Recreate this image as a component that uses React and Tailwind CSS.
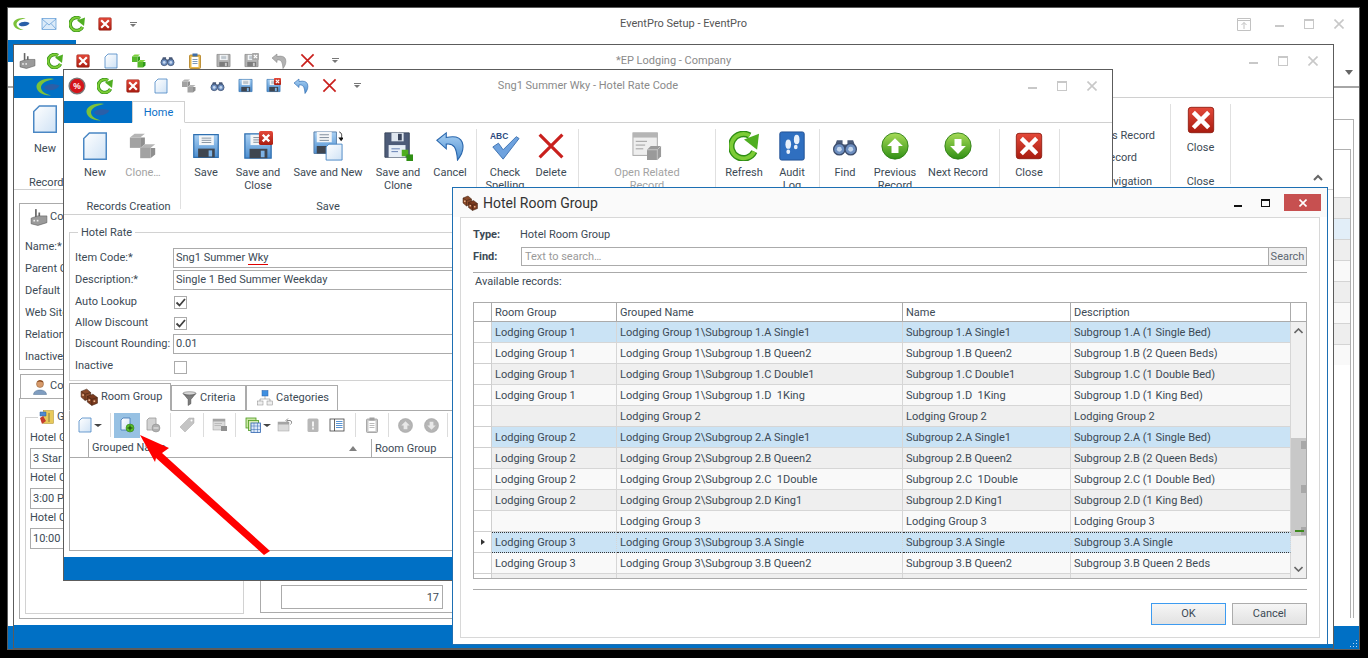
import React from "react";

const S = ({ s = 16, v = 32, children, className = "" }) => (
  <svg width={s} height={s} viewBox={`0 0 ${v} ${v}`} className={`shrink-0 ${className}`}>{children}</svg>
);

const Defs = () => (
  <svg width="0" height="0" className="absolute">
    <defs>
      <linearGradient id="gDoc" x1="0" y1="0" x2="1" y2="1"><stop offset="0" stopColor="#ffffff" /><stop offset="1" stopColor="#cfe2f5" /></linearGradient>
      <linearGradient id="gRed" x1="0" y1="0" x2="0" y2="1"><stop offset="0" stopColor="#e4493a" /><stop offset="1" stopColor="#a81c10" /></linearGradient>
      <linearGradient id="gGreen" x1="0" y1="0" x2="0" y2="1"><stop offset="0" stopColor="#a8dc58" /><stop offset="1" stopColor="#2f8f14" /></linearGradient>
      <linearGradient id="gBlue" x1="0" y1="0" x2="0" y2="1"><stop offset="0" stopColor="#a9d0f3" /><stop offset="1" stopColor="#4c8ed0" /></linearGradient>
    </defs>
  </svg>
);

const Doc = ({ s }) => (
  <S s={s}><path d="M10 2H28V30H4V8Z" fill="url(#gDoc)" stroke="#4a87c4" strokeWidth="1.6" /></S>
);
const Cubes = ({ s, c = "gray" }) => {
  const a = c === "gray" ? ["#b5b5b5", "#8f8f8f", "#a2a2a2"] : ["#7ed23c", "#2f9a1a", "#56b82a"];
  const cube = (x, y) => (
    <g transform={`translate(${x} ${y})`}>
      <path d="M0 4L5 0H16L11 4Z" fill={a[0]} />
      <path d="M11 4H16V0L16 11L11 15Z" fill={a[1]} />
      <rect y="4" width="11" height="11" fill={a[2]} />
    </g>
  );
  return <S s={s}>{cube(2, 3)}{cube(13, 14)}</S>;
};
const Floppy = ({ s, gray, x }) => {
  const body = gray ? "#b4b4b4" : "url(#gBlue)";
  const edge = gray ? "#808080" : "#2f6fb0";
  return (
    <S s={s}>
      <path d="M2 3H30V29H2Z" fill={body} stroke={edge} strokeWidth="1.4" />
      <rect x="8" y="4" width="17" height="11" fill="#f4f6f8" />
      <path d="M11 7H22M11 9.500H22M11 12H22" stroke="#7b8a99" strokeWidth="1" />
      <rect x="7" y="19" width="19" height="10" fill={gray ? "#7c7c7c" : "#3f4650"} />
      <rect x="19" y="21" width="4" height="7" fill={gray ? "#ccc" : "#7db3e6"} />
      {x && <g><rect x="17" y="0" width="15" height="15" rx="2" fill={gray ? "#a8a8a8" : "url(#gRed)"} /><path d="M21 4L28 11M28 4L21 11" stroke="#fff" strokeWidth="2.6" /></g>}
    </S>
  );
};
const DarkFloppy = ({ s }) => (
  <S s={s}>
    <path d="M2 2H28V28H2Z" fill="#4d5b78" stroke="#39445c" />
    <rect x="9" y="2" width="13" height="9" fill="#dfe6ef" />
    <rect x="16" y="3" width="4" height="7" fill="#39445c" />
    <rect x="6" y="15" width="18" height="13" fill="#e7eef7" />
    <path d="M9 19H18M9 22H16" stroke="#5f7bb0" />
    <rect x="20" y="20" width="7" height="7" fill="#4fae21" />
    <rect x="25" y="25" width="7" height="7" fill="#2f8f14" />
  </S>
);
const SaveNew = ({ s }) => (
  <S s={s}>
    <path d="M1 1H25V24H1Z" fill="url(#gBlue)" stroke="#5a7fa8" />
    <rect x="4" y="1" width="16" height="11" fill="#f4f6f8" />
    <path d="M7 4H17M7 7H17M7 10H17" stroke="#7b8a99" />
    <rect x="4" y="16" width="16" height="8" fill="#3f4650" />
    <path d="M17 14H31V31H14V17Z" fill="url(#gDoc)" stroke="#4a87c4" />
    <path d="M28 1C31 2 31 5 30 8" fill="none" stroke="#222" />
    <path d="M27 7H33L30 11Z" fill="#111" />
  </S>
);
const RedBox = ({ s }) => (
  <S s={s}>
    <rect x="1.500" y="1.500" width="29" height="29" rx="3" fill="url(#gRed)" stroke="#8e1c10" />
    <path d="M9 9L23 23M23 9L9 23" stroke="#fff" strokeWidth="5" strokeLinecap="square" />
  </S>
);
const BigX = ({ s }) => (
  <S s={s}><path d="M3 3L29 29M29 3L3 29" stroke="#c9201d" strokeWidth="3.6" /></S>
);
const Refresh = ({ s }) => (
  <S s={s}>
    <path d="M27 22A13 13 0 1 1 22 5" fill="none" stroke="#2f8f14" strokeWidth="7" />
    <path d="M27 22A13 13 0 1 1 22 5" fill="none" stroke="#7dcc36" strokeWidth="4" />
    <path d="M16 9L32 3L30 20Z" fill="#4fae21" />
  </S>
);
const Binoc = ({ s }) => (
  <S s={s}>
    <path d="M6 9H13V14H19V9H26L30 20H2Z" fill="#4a5a78" />
    <circle cx="9" cy="20" r="7" fill="#6e8fc0" stroke="#3c4d6c" strokeWidth="1.6" />
    <circle cx="23" cy="20" r="7" fill="#6e8fc0" stroke="#3c4d6c" strokeWidth="1.6" />
    <circle cx="9" cy="20" r="3" fill="#c6d8ee" />
    <circle cx="23" cy="20" r="3" fill="#c6d8ee" />
  </S>
);
const Undo = ({ s, gray }) => (
  <S s={s}>
    <path
      d="M12 2L2 10L12 19V14C20 13 23 17 24 31C29 25 31 18 29 12C27 7 21 5 12 7Z"
      fill={gray ? "#b2b2b2" : "url(#gBlue)"}
      stroke={gray ? "#8c8c8c" : "#2a67ad"}
      strokeWidth="1.2"
    />
  </S>
);
const Clip = ({ s, gray }) => (
  <S s={s}>
    <rect x="5" y="4" width="22" height="27" rx="2" fill={gray ? "#c9c9c9" : "#e8b84a"} stroke={gray ? "#999" : "#b07d1e"} strokeWidth="1.6" />
    <rect x="9" y="8" width="14" height="20" fill="#fff" />
    <rect x="11" y="1" width="10" height="6" fill={gray ? "#a0a0a0" : "#3f6fa8"} />
    <path d="M11 13H21M11 17H21M11 21H21" stroke={gray ? "#aaa" : "#5a7fa8"} strokeWidth="1.6" />
  </S>
);
const Round = ({ s, dir, gray }) => (
  <S s={s}>
    <circle cx="16" cy="16" r="15" fill={gray ? "#b5b5b5" : "url(#gGreen)"} stroke={gray ? "#999" : "#2b7d12"} />
    <path d={dir === "up" ? "M16 7L25 16H20V24H12V16H7Z" : "M16 25L25 16H20V8H12V16H7Z"} fill={gray ? "#e8e8e8" : "#fff"} />
  </S>
);
const Check = ({ s }) => (
  <S s={s}>
    <text x="0" y="8" fontFamily="'Liberation Sans',sans-serif" fontWeight="700" fontSize="9" fill="#2c4a80">ABC</text>
    <path d="M3 17L9 13L14 20L28 6L31 8L14 30Z" fill="#6ea2de" stroke="#3f72b0" />
  </S>
);
const Audit = ({ s }) => (
  <S s={s}>
    <rect x="3" y="1" width="26" height="30" rx="2" fill="#2f6fc0" stroke="#1f4f92" />
    <ellipse cx="12" cy="14" rx="3" ry="5" fill="#e8f0fa" />
    <ellipse cx="12" cy="22" rx="2" ry="2.400" fill="#e8f0fa" />
    <ellipse cx="21" cy="9" rx="3" ry="5" fill="#e8f0fa" />
    <ellipse cx="20" cy="17" rx="2" ry="2.400" fill="#e8f0fa" />
  </S>
);
const Related = ({ s }) => (
  <S s={s}>
    <rect x="1" y="2" width="26" height="24" fill="#eee" stroke="#a5a5a5" />
    <rect x="1" y="2" width="26" height="5" fill="#b5b5b5" />
    <path d="M4 11H16M4 15H14M4 19H12" stroke="#9a9a9a" />
    <path d="M16 20L20 16H31V27L27 31H16Z" fill="#9a9a9a" />
    <path d="M16 20H27V31M27 20L31 16" stroke="#c7c7c7" fill="none" />
  </S>
);
const Dice = ({ s }) => (
  <S s={s}>
    <path d="M2 6L12 2L19 8V18L9 22L2 16Z" fill="#8a4a2a" stroke="#3e2010" />
    <path d="M13 15L23 11L31 17V27L21 31L13 25Z" fill="#7a3a1e" stroke="#3e2010" />
    <path d="M2 6L9 11L19 8M9 11V22M13 15L21 20L31 17M21 20V31" fill="none" stroke="#3e2010" />
    <rect x="4" y="11" width="3" height="3" fill="#e9b48d" />
    <rect x="15" y="20" width="3" height="3" fill="#e9b48d" />
    <rect x="24" y="22" width="3" height="3" fill="#e9b48d" />
  </S>
);
const Funnel = ({ s }) => (
  <S s={s}>
    <ellipse cx="16" cy="5" rx="14" ry="3.500" fill="#d8d8d8" stroke="#555" />
    <path d="M3 6L13 18V31L19 27V18L29 6C24 10 8 10 3 6Z" fill="#7c7c7c" stroke="#444" />
  </S>
);
const Org = ({ s }) => (
  <S s={s}>
    <rect x="10" y="1" width="12" height="11" fill="#3f8fe0" stroke="#2a5fa8" />
    <path d="M16 12V18M6 22V18H26V22" fill="none" stroke="#777" />
    <rect x="1" y="22" width="11" height="8" fill="#eee" stroke="#888" />
    <rect x="20" y="22" width="11" height="8" fill="#eee" stroke="#888" />
  </S>
);
const Person = ({ s }) => (
  <S s={s}>
    <circle cx="16" cy="10" r="7" fill="#d79a6a" stroke="#8a5a30" />
    <path d="M10 6C12 1 22 1 23 7L16 5Z" fill="#8a4a20" />
    <path d="M3 31C3 19 29 19 29 31Z" fill="#7f9dc0" stroke="#52708f" />
  </S>
);
const Factory = ({ s }) => (
  <S s={s}>
    <rect x="9" y="2" width="3" height="14" fill="#666" />
    <rect x="15" y="8" width="3" height="8" fill="#666" />
    <path d="M2 18L14 14H30V26L14 31L2 28Z" fill="#9a9a9a" stroke="#555" />
    <rect x="6" y="21" width="3" height="3" fill="#eee" />
    <rect x="12" y="21" width="3" height="3" fill="#eee" />
  </S>
);
const GroupIcon = ({ s }) => (
  <S s={s}>
    <rect x="9" y="3" width="20" height="26" fill="#e8c95a" stroke="#a98a2a" />
    <path d="M2 6H14V14H2Z" fill="#4f8ad0" stroke="#2f5f9a" />
    <path d="M2 18L8 14L14 24L6 30Z" fill="#c43c2c" />
    <path d="M20 8V26" stroke="#8a7a3a" strokeWidth="2" />
  </S>
);
const Mail = ({ s }) => (
  <S s={s}>
    <rect x="2" y="5" width="28" height="22" fill="#dcebf9" stroke="#5a97d4" strokeWidth="1.4" />
    <path d="M2 6L16 18L30 6M2 26L12 15M30 26L20 15" fill="none" stroke="#5a97d4" strokeWidth="1.4" />
  </S>
);
const Logo = ({ w = 24, h = 18 }) => (
  <svg width={w} height={h} viewBox="0 0 24 18" className="shrink-0">
    <path d="M18 1C8-1 0 4 .5 9C1 14 7 18 15 17.500C9 16 5 13 5 9.500C5 5.500 10 2.500 18 1Z" fill="#7cc23a" />
    <path d="M8 9C12 5.500 18 5 23.500 7.500C21 12 14 13.500 9 11Z" fill="#2a5fa8" />
  </svg>
);
const Pct = ({ s }) => (
  <S s={s}>
    <circle cx="16" cy="16" r="14" fill="#d4141a" stroke="#777" strokeWidth="2.4" />
    <text x="16" y="21" textAnchor="middle" fontFamily="'Liberation Sans',sans-serif" fontWeight="700" fontSize="15" fill="#fff">%</text>
  </S>
);
const AddDoc = ({ s, gray, minus }) => (
  <S s={s}>
    <path d="M8 2H22V26H4V6Z" fill={gray ? "#d2d2d2" : "url(#gDoc)"} stroke={gray ? "#999" : "#3e74b4"} strokeWidth="1.6" />
    <circle cx="22" cy="22" r="8" fill={gray ? "#b0b0b0" : "#5cc02a"} stroke={gray ? "#888" : "#226f10"} />
    <path d={minus ? "M17 22H27" : "M17 22H27M22 17V27"} stroke={gray ? "#eee" : "#123c08"} strokeWidth="2" />
  </S>
);
const Tag = ({ s }) => (
  <S s={s}><path d="M2 20L20 2H30V12L12 30Z" fill="#c4c4c4" stroke="#a8a8a8" /><circle cx="25" cy="7" r="2" fill="#fff" /></S>
);
const FormGray = ({ s }) => (
  <S s={s}>
    <rect x="2" y="4" width="24" height="22" fill="#dcdcdc" stroke="#9a9a9a" />
    <rect x="2" y="4" width="24" height="5" fill="#a5a5a5" />
    <path d="M5 13H20M5 17H18" stroke="#9a9a9a" />
    <rect x="18" y="18" width="12" height="10" fill="#909090" />
  </S>
);
const Colored = ({ s }) => (
  <S s={s}>
    <rect x="2" y="2" width="20" height="20" fill="#cbe8a5" stroke="#4c9a1e" strokeWidth="1.6" />
    <rect x="7" y="7" width="20" height="20" fill="#d8ecb8" stroke="#4c9a1e" strokeWidth="1.6" />
    <rect x="12" y="12" width="19" height="19" fill="#dbe8f8" stroke="#2f64b0" strokeWidth="1.6" />
    <path d="M12 18H31M12 25H31M18 12V31M25 12V31" stroke="#2f64b0" />
  </S>
);
const Restore = ({ s }) => (
  <S s={s}>
    <rect x="2" y="10" width="22" height="18" fill="#dadada" stroke="#a0a0a0" />
    <rect x="2" y="10" width="22" height="5" fill="#a5a5a5" />
    <path d="M20 7H26C30 7 30 13 27 15M22 3L18 7L22 11" fill="none" stroke="#8a8a8a" strokeWidth="2" />
  </S>
);
const Excl = ({ s }) => (
  <S s={s}>
    <rect x="5" y="3" width="22" height="27" rx="3" fill="#b8b8b8" />
    <rect x="14" y="9" width="4" height="10" fill="#f2f2f2" />
    <rect x="14" y="21" width="4" height="4" fill="#f2f2f2" />
  </S>
);
const Listing = ({ s }) => (
  <S s={s}>
    <rect x="2" y="4" width="28" height="24" fill="#fff" stroke="#404040" strokeWidth="1.6" />
    <path d="M11 4V28" stroke="#404040" strokeWidth="1.6" />
    <path d="M14 9H27M14 13H27M14 17H27M14 21H27" stroke="#2f78c8" strokeWidth="1.6" />
  </S>
);
const Grip = () => (
  <svg width="9" height="9" viewBox="0 0 9 9" className="shrink-0">
    <path d="M7 1h1v1H7ZM4 4h1v1H4ZM7 4h1v1H7ZM1 7h1v1H1ZM4 7h1v1H4ZM7 7h1v1H7Z" fill="#b9d6ee" />
  </svg>
);

const Caret = () => <div className="w-0 h-0 border-x-[4px] border-x-transparent border-t-[3px] border-t-[#444]" />;
const QatCaret = () => (
  <div className="flex flex-col items-center gap-[1px]">
    <div className="w-[7px] h-px bg-[#777]" />
    <div className="w-0 h-0 border-x-[3.5px] border-x-transparent border-t-[3px] border-t-[#777]" />
  </div>
);

const WinCtl = ({ pin }) => (
  <div className="flex items-center text-[#c8c8c8]">
    {pin && (
      <svg width="14" height="13" viewBox="0 0 14 13" className="mr-[13px]">
        <path d="M.5.5H13.500V12.500H.5ZM.5 2.500H13.500M7 11V4.500M4.500 7L7 4.500L9.500 7" fill="none" stroke="#c2c2c2" />
      </svg>
    )}
    <div className="w-[30px] flex justify-center"><div className="w-[9px] h-[2px] mt-[4px] bg-[#c8c8c8]" /></div>
    <div className="w-[30px] flex justify-center"><div className="w-[10px] h-[10px] border border-[#c8c8c8] border-t-[2px]" /></div>
    <div className="w-[30px] flex justify-center">
      <svg width="10" height="10" viewBox="0 0 10 10"><path d="M.5.5L9.500 9.500M9.500.5L.5 9.500" stroke="#c8c8c8" strokeWidth="1.6" /></svg>
    </div>
  </div>
);

const Qat = ({ items }) => (
  <div className="flex items-center -ml-px">
    {items.map((it, i) => (
      <div key={i} className="w-[28px] flex justify-center items-center">{it}</div>
    ))}
    <div className="w-[20px] ml-[4px] flex justify-center"><QatCaret /></div>
  </div>
);

const Sep = () => <div className="w-px h-[80px] bg-[#e0e0e0] shrink-0" />;

const RBtn = ({ w, icon, label, muted }) => (
  <div className={`flex flex-col items-center shrink-0 ${w} ${muted ? "text-[#a3a3a3]" : "text-[#3c4a55]"}`}>
    <div className="h-[32px] mt-[1px] flex items-center justify-center">{icon}</div>
    <div className="mt-[4px] text-center leading-[13px] whitespace-pre">{label}</div>
  </div>
);

const RGroup = ({ label, children, className = "" }) => (
  <div className={`flex flex-col shrink-0 ${className}`}>
    <div className="flex h-[70px]">{children}</div>
    <div className="h-[14px] leading-[16px] text-center text-[#3c4a55] whitespace-nowrap">{label}</div>
  </div>
);

const Input = ({ children, className = "" }) => (
  <div className={`border border-[#ababab] bg-white pl-[2px] pt-px flex items-center overflow-hidden whitespace-nowrap text-[#3c4a55] ${className}`}>{children}</div>
);
const Box = ({ checked }) => (
  <div className="w-[13px] h-[13px] border border-[#ababab] bg-white flex items-center justify-center">
    {checked && (
      <svg width="11" height="11" viewBox="0 0 11 11"><path d="M1.500 5.500L4.500 8.500L10 2" fill="none" stroke="#404040" strokeWidth="1.8" /></svg>
    )}
  </div>
);

const rows = [
  ["Lodging Group 1", "Lodging Group 1\\Subgroup 1.A Single1", "Subgroup 1.A Single1", "Subgroup 1.A (1 Single Bed)", "s"],
  ["Lodging Group 1", "Lodging Group 1\\Subgroup 1.B Queen2", "Subgroup 1.B Queen2", "Subgroup 1.B (2 Queen Beds)", "l"],
  ["Lodging Group 1", "Lodging Group 1\\Subgroup 1.C Double1", "Subgroup 1.C Double1", "Subgroup 1.C (1 Double Bed)", "g"],
  ["Lodging Group 1", "Lodging Group 1\\Subgroup 1.D  1King", "Subgroup 1.D  1King", "Subgroup 1.D (1 King Bed)", "l"],
  ["", "Lodging Group 2", "Lodging Group 2", "Lodging Group 2", "g"],
  ["Lodging Group 2", "Lodging Group 2\\Subgroup 2.A Single1", "Subgroup 2.A Single1", "Subgroup 2.A (1 Single Bed)", "s"],
  ["Lodging Group 2", "Lodging Group 2\\Subgroup 2.B Queen2", "Subgroup 2.B Queen2", "Subgroup 2.B (2 Queen Beds)", "g"],
  ["Lodging Group 2", "Lodging Group 2\\Subgroup 2.C  1Double", "Subgroup 2.C  1Double", "Subgroup 2.C (1 Double Bed)", "l"],
  ["Lodging Group 2", "Lodging Group 2\\Subgroup 2.D King1", "Subgroup 2.D King1", "Subgroup 2.D (1 King Bed)", "g"],
  ["", "Lodging Group 3", "Lodging Group 3", "Lodging Group 3", "l"],
  ["Lodging Group 3", "Lodging Group 3\\Subgroup 3.A Single", "Subgroup 3.A Single", "Subgroup 3.A Single", "f"],
  ["Lodging Group 3", "Lodging Group 3\\Subgroup 3.B Queen2", "Subgroup 3.B Queen2", "Subgroup 3.B Queen 2 Beds", "l"],
];

const bgOf = { s: "bg-[#cae3f5]", f: "bg-[#cae3f5]", g: "bg-[#efefef]", l: "bg-[#f9f9f9]" };
const GRID = "grid grid-cols-[18px_125px_286px_168px_220px]";

const Grid = () => (
  <div className="mt-[14px] h-[277px] border border-[#ababab] flex overflow-hidden bg-white">
    <div className="w-[817px] shrink-0 flex flex-col">
      <div className={`${GRID} h-[19px] shrink-0 border-b border-[#ababab] text-[#3c4a55] leading-[20px]`}>
        {["", "Room Group", "Grouped Name", "Name", "Description"].map((h, i) => (
          <div key={i} className="border-r border-[#ababab] pl-[3px] h-[19px]">{h}</div>
        ))}
      </div>
      {rows.map((r, i) => (
        <div key={i} className={`${GRID} h-[21px] shrink-0 text-[#3c4a55]`}>
          <div className="border-r border-b border-[#cfcfcf] bg-white flex items-center justify-center">
            {r[4] === "f" && <div className="w-0 h-0 border-y-[3px] border-y-transparent border-l-[4px] border-l-[#333] ml-[1px]" />}
          </div>
          {r.slice(0, 4).map((c, j) => (
            <div key={j} className={`${bgOf[r[4]]} border-b border-r border-[#d6d6d6] pl-[3px] leading-[22px] whitespace-pre overflow-hidden ${r[4] === "f" ? "border-y border-y-[#333] border-dotted !leading-[20px]" : ""}`}>{c}</div>
          ))}
        </div>
      ))}
      <div className={`${GRID} h-[4px] shrink-0`}>
        <div className="border-r border-[#cfcfcf]" />
        <div className="bg-[#efefef] border-r border-[#d6d6d6]" />
        <div className="bg-[#efefef] border-r border-[#d6d6d6]" />
        <div className="bg-[#efefef] border-r border-[#d6d6d6]" />
        <div className="bg-[#efefef] border-r border-[#d6d6d6]" />
      </div>
    </div>
    <div className="flex-1 flex flex-col">
      <div className="h-[19px] shrink-0 border-b border-[#ababab]" />
      <div className="flex-1 bg-[#f0f0f0] flex flex-col relative">
        <div className="h-[18px] flex items-center justify-center">
          <svg width="9" height="6" viewBox="0 0 9 6"><path d="M.5 5L4.500 1L8.500 5" fill="none" stroke="#666" strokeWidth="1.6" /></svg>
        </div>
        <div className="mt-[98px] h-[98px] bg-[#c8c8c8] relative">
          <div className="absolute right-0 top-[3px] w-[5px] h-[8px] bg-[#a8a8a8]" />
          <div className="absolute right-0 top-[47px] w-[5px] h-[8px] bg-[#a8a8a8]" />
          <div className="absolute right-0 top-[89px] w-[5px] h-[8px] bg-[#a8a8a8]" />
          <div className="absolute left-[4px] top-[92px] w-[9px] h-[1.5px] bg-[#3f8a20]" />
        </div>
        <div className="mt-auto h-[19px] flex items-center justify-center">
          <svg width="9" height="6" viewBox="0 0 9 6"><path d="M.5 1L4.500 5L8.500 1" fill="none" stroke="#666" strokeWidth="1.6" /></svg>
        </div>
      </div>
    </div>
  </div>
);

const Btn = ({ children, primary }) => (
  <div className={`w-[75px] h-[22px] pt-px flex items-center justify-center text-[#3c4a55] bg-gradient-to-b from-[#f6f6f6] to-[#e2e2e2] border ${primary ? "border-[#3d9bf0]" : "border-[#acacac]"}`}>{children}</div>
);

const Dialog = () => (
  <div className="absolute left-[452px] top-[187px] w-[876px] h-[458px] border border-[#1d6fb3] bg-white flex flex-col">
    <div className="h-[29px] shrink-0 bg-[#fafafa] flex items-center pl-[9px]">
      <Dice s={16} />
      <span className="ml-[5px] text-[14px] text-[#333] leading-[18px]">Hotel Room Group</span>
      <div className="ml-auto flex items-center pr-[6px]">
        <div className="w-[8px] h-[2px] bg-[#111] mt-[6px]" />
        <div className="ml-[19px] w-[9px] h-[8px] border border-[#111] border-t-[2px]" />
        <div className="ml-[14px] w-[37px] h-[17px] bg-[#c75050] flex items-center justify-center">
          <svg width="8" height="8" viewBox="0 0 8 8"><path d="M.5.500L7.500 7.500M7.500.500L.5 7.500" stroke="#fff" strokeWidth="1.6" /></svg>
        </div>
      </div>
    </div>
    <div className="mx-[7px] h-[421px] shrink-0 border border-[#d8d8d8] flex flex-col px-[12px] bg-white">
      <div className="h-[29px] shrink-0 flex items-end pb-[5px] leading-[15px] text-[#3c4a55]">
        <span className="w-[47px] font-bold">Type:</span>
        <span>Hotel Room Group</span>
      </div>
      <div className="h-[19px] flex items-center shrink-0">
        <span className="w-[48px] font-bold text-[#3c4a55] leading-[17px] pb-px">Find:</span>
        <div className="flex-1 h-[19px] border border-[#ababab] flex">
          <div className="flex-1 pl-[3px] leading-[18px] text-[#9a9a9a]">Text to search…</div>
          <div className="w-[38px] border-l border-[#ababab] bg-[#efefef] text-[#5c6670] text-center leading-[18px]">Search</div>
        </div>
      </div>
      <div className="mt-[6px] h-px bg-[#aaaaaa] shrink-0" />
      <div className="pl-[2px] leading-[18px] h-[15px] shrink-0 text-[#3c4a55]">Available records:</div>
      <Grid />
      <div className="mt-[10px] h-px bg-[#aaaaaa] shrink-0" />
      <div className="mt-[13px] flex justify-end gap-[6px]">
        <Btn primary>OK</Btn>
        <Btn>Cancel</Btn>
      </div>
    </div>
  </div>
);

const TabBtn = ({ icon, label, active, w }) => (
  <div className={`${w} flex items-center border border-[#ababab] bg-white pl-[10px] gap-[3px] text-[#3c4a55] ${active ? "h-[28px] border-b-white -mb-px" : "h-[25px] border-b-0"}`}>
    {icon}<span className="pt-px">{label}</span>
  </div>
);

const TSep = ({ ml = "" }) => <div className={`w-px h-[24px] bg-[#dcdcdc] shrink-0 ${ml}`} />;
const TI = ({ w, children, className = "" }) => <div className={`h-[24px] flex items-center justify-center shrink-0 ${w} ${className}`}>{children}</div>;

const Window3 = () => (
  <div className="absolute left-[63px] top-[69px] w-[1050px] h-[512px] border border-[#5c5c5c] bg-white flex flex-col">
    <div className="h-[31px] shrink-0 flex items-center relative">
      <Qat items={[<Pct s={18} />, <Refresh s={16} />, <RedBox s={14} />, <Doc s={16} />, <Cubes s={16} />, <Binoc s={15} />, <Floppy s={15} />, <Floppy s={15} x />, <Undo s={16} />, <BigX s={15} />]} />
      <div className="absolute inset-x-0 text-center text-[#8a8a8a] pt-[1px]">Sng1 Summer Wky - Hotel Rate Code</div>
      <div className="ml-auto pr-[5px]"><WinCtl /></div>
    </div>
    <div className="h-[22px] shrink-0 flex border-b border-[#d0d0d0]">
      <div className="w-[68px] h-[22px] bg-[#0070c5] flex items-center justify-center"><Logo /></div>
      <div className="w-[53px] h-[22px] border border-[#d0d0d0] border-b-white bg-white text-[#0c6fc7] text-center leading-[22px]">Home</div>
    </div>
    <div className="h-[92px] shrink-0 border-b border-[#d0d0d0] pt-[6px] flex">
      <RGroup label="Records Creation" className="pl-[13px] w-[116px]">
        <RBtn w="w-[36px]" icon={<Doc s={30} />} label="New" />
        <RBtn w="w-[60px]" icon={<Cubes s={30} />} label="Clone…" muted />
      </RGroup>
      <Sep />
      <RGroup label="Save">
        <RBtn w="w-[50px]" icon={<Floppy s={28} />} label="Save" />
        <RBtn w="w-[54px]" icon={<Floppy s={30} x />} label={"Save and\nClose"} />
        <RBtn w="w-[86px]" icon={<SaveNew s={30} />} label="Save and New" />
        <RBtn w="w-[54px]" icon={<DarkFloppy s={30} />} label={"Save and\nClone"} />
        <RBtn w="w-[50px]" icon={<Undo s={30} />} label="Cancel" />
      </RGroup>
      <div className="w-px" />
      <Sep />
      <RGroup label="" className="w-[101px]">
        <RBtn w="w-[56px]" icon={<Check s={30} />} label={"Check\nSpelling"} />
        <RBtn w="w-[36px]" icon={<BigX s={28} />} label="Delete" />
      </RGroup>
      <Sep />
      <RGroup label="">
        <RBtn w="w-[136px]" icon={<Related s={30} />} label={"Open Related\nRecord"} muted />
      </RGroup>
      <Sep />
      <RGroup label="" className="w-[103px]">
        <RBtn w="w-[56px]" icon={<Refresh s={30} />} label="Refresh" />
        <RBtn w="w-[40px]" icon={<Audit s={30} />} label={"Audit\nLog"} />
      </RGroup>
      <Sep />
      <RGroup label="" className="w-[179px]">
        <RBtn w="w-[50px]" icon={<Binoc s={26} />} label="Find" />
        <RBtn w="w-[50px]" icon={<Round s={28} dir="up" />} label={"Previous\nRecord"} />
        <RBtn w="w-[76px]" icon={<Round s={28} dir="down" />} label="Next Record" />
      </RGroup>
      <Sep />
      <RGroup label="" className="w-[59px]">
        <RBtn w="w-[58px]" icon={<RedBox s={28} />} label="Close" />
      </RGroup>
      <Sep />
    </div>
    <div className="px-[5px] flex-1 flex flex-col min-h-0">
      <div className="mt-[17px] h-[149px] shrink-0 border border-[#d2d2d2] relative pt-[15px] pl-[5px]">
        <div className="absolute left-[8px] -top-[8px] bg-white px-[3px] leading-[15px] text-[#3c4a55]">Hotel Rate</div>
        <div className="grid grid-cols-[98px_1fr] grid-rows-[22px_22px_21px_21px_22px_22px] text-[#3c4a55] whitespace-nowrap">
          <div className="leading-[20px]">Item Code:*</div>
          <Input className="h-[20px]">
            <span className="whitespace-pre">Sng1 Summer <span className="border-b border-[#e00000]">Wky</span></span>
          </Input>
          <div className="leading-[20px]">Description:*</div>
          <Input className="h-[20px]">Single 1 Bed Summer Weekday</Input>
          <div className="leading-[20px]">Auto Lookup</div>
          <div className="flex items-center pl-[1px]"><Box checked /></div>
          <div className="leading-[20px]">Allow Discount</div>
          <div className="flex items-center pl-[1px]"><Box checked /></div>
          <div className="leading-[20px]">Discount Rounding:</div>
          <Input className="h-[20px]">0.01</Input>
          <div className="leading-[20px]">Inactive</div>
          <div className="flex items-center pl-[1px]"><Box /></div>
        </div>
      </div>
      <div className="mt-[3px] h-[27px] shrink-0 flex items-end border-b border-[#ababab]">
        <TabBtn w="w-[102px]" active icon={<Dice s={18} />} label="Room Group" />
        <TabBtn w="w-[75px]" icon={<Funnel s={15} />} label="Criteria" />
        <TabBtn w="w-[92px]" icon={<Org s={16} />} label="Categories" />
      </div>
      <div className="h-[140px] shrink-0 border-x border-b border-[#ababab] flex flex-col">
        <div className="h-[26px] shrink-0 flex items-center pl-[5px] mt-[1px]">
          <TI w="w-[20px]"><Doc s={16} /></TI>
          <TI w="w-[6px]"><Caret /></TI>
          <TSep ml="ml-[9px]" />
          <TI w="w-[26px]" className="ml-[3px] bg-[#97c1e3] !h-[25px]"><AddDoc s={16} /></TI>
          <TI w="w-[26px]"><AddDoc s={16} gray minus /></TI>
          <TSep ml="ml-[4px]" />
          <TI w="w-[32px]"><Tag s={16} /></TI>
          <TSep />
          <TI w="w-[31px]"><FormGray s={16} /></TI>
          <TSep />
          <TI w="w-[22px]" className="ml-[6px]"><Colored s={16} /></TI>
          <TI w="w-[6px]"><Caret /></TI>
          <TI w="w-[30px]"><Restore s={16} /></TI>
          <TI w="w-[26px]"><Excl s={16} /></TI>
          <TI w="w-[22px]"><Listing s={16} /></TI>
          <TSep ml="ml-[7px]" />
          <TI w="w-[32px]"><Clip s={16} gray /></TI>
          <TSep />
          <TI w="w-[32px]"><Round s={15} dir="up" gray /></TI>
          <TI w="w-[20px]"><Round s={15} dir="down" gray /></TI>
          <TSep ml="ml-[6px]" />
        </div>
        <div className="h-[19px] shrink-0 flex border-b border-[#ababab] text-[#3c4a55] mt-[1px]">
          <div className="w-[19px] border-r border-[#ababab]" />
          <div className="w-[283px] border-r border-[#ababab] pl-[3px] leading-[20px] flex items-center pr-[14px]">
            <span>Grouped Name</span>
            <div className="ml-auto w-0 h-0 border-x-[4px] border-x-transparent border-b-[5px] border-b-[#808080]" />
          </div>
          <div className="pl-[3px] leading-[20px]">Room Group</div>
        </div>
      </div>
    </div>
    <div className="h-[23px] shrink-0 mt-auto bg-[#0070c5]" />
  </div>
);

const Window2 = () => (
  <div className="absolute left-[13px] top-[44px] w-[1321px] h-[605px] border border-[#5c5c5c] bg-white flex flex-col">
    <div className="h-[31px] shrink-0 flex items-center relative">
      <Qat items={[<Factory s={17} />, <Refresh s={16} />, <RedBox s={14} />, <Doc s={16} />, <Cubes s={16} c="green" />, <Binoc s={15} />, <Clip s={16} />, <Floppy s={15} gray />, <Floppy s={15} gray x />, <Undo s={16} gray />, <BigX s={15} />]} />
      <div className="absolute inset-x-0 text-center text-[#8a8a8a] pt-px">*EP Lodging - Company</div>
      <div className="ml-auto pr-[5px]"><WinCtl /></div>
    </div>
    <div className="h-[22px] shrink-0 border-b border-[#d0d0d0] flex">
      <div className="w-[68px] h-[22px] bg-[#0070c5] flex items-center justify-center"><Logo /></div>
    </div>
    <div className="h-[92px] shrink-0 border-b border-[#d0d0d0] flex relative">
      <div className="flex flex-col w-[100px] pl-[6px] text-[#3c4a55]">
        <div className="w-[50px] flex flex-col items-center pt-[6px]">
          <Doc s={30} />
          <div className="mt-[8px] leading-[14px]">New</div>
        </div>
        <div className="mt-[20px] pl-[9px] leading-[14px] whitespace-nowrap">Records Creation</div>
      </div>
      <div className="flex-1" />
      <div className="w-[160px] flex flex-col items-end pt-[31px] pr-[15px] text-[#3c4a55] leading-[14px]">
        <div>Previous Record</div>
        <div className="mt-[8px] pr-[18px]">Next Record</div>
        <div className="mt-[10px] pr-[3px]">Record Navigation</div>
      </div>
      <div className="w-px h-[80px] mt-[6px] bg-[#e0e0e0]" />
      <div className="w-[59px] flex flex-col items-center text-[#3c4a55] pt-[8px]">
        <RedBox s={28} />
        <div className="mt-[7px] leading-[14px]">Close</div>
        <div className="mt-[20px] leading-[14px]">Close</div>
      </div>
      <div className="w-px h-[80px] mt-[6px] bg-[#e0e0e0]" />
      <div className="w-[102px] flex items-end justify-end pb-[8px] pr-[10px]">
        <svg width="10" height="7" viewBox="0 0 10 7"><path d="M1 6L5 2L9 6" fill="none" stroke="#666" strokeWidth="2" /></svg>
      </div>
    </div>
    <div className="flex-1 min-h-0 px-[5px] pt-[13px] flex flex-col">
      <div className="w-[1200px] h-[167px] shrink-0 border border-[#ababab] pl-[10px] text-[#3c4a55]">
        <div className="flex items-center h-[26px] gap-[2px]"><Factory s={18} /><span>Company</span></div>
        <div className="mt-[6px] -ml-[5px] leading-[22px] h-[132px]">
          <div>Name:*</div><div>Parent Company</div><div>Default Group</div><div>Web Site</div><div>Relationship</div><div>Inactive</div>
        </div>
      </div>
      <div className="mt-[4px] ml-[1px] w-[104px] h-[24px] shrink-0 border border-b-0 border-[#ababab] flex items-center pl-[11px] gap-[2px] text-[#3c4a55]">
        <Person s={16} /><span>Contact</span>
      </div>
      <div className="w-[1200px] h-[221px] shrink-0 border border-[#ababab] flex pl-[5px] pt-[18px] gap-[16px]">
        <div className="w-[219px] h-[197px] shrink-0 border border-[#d2d2d2] relative pl-[4px] text-[#3c4a55]">
          <div className="absolute left-[12px] -top-[9px] flex items-center bg-white px-[1px] gap-[2px]">
            <GroupIcon s={16} /><span>Group</span>
          </div>
          <div className="pt-[11px] leading-[18px]">Hotel Group:</div>
          <Input className="w-[170px] h-[21px] mt-[1px] !pt-[2px]">3 Star</Input>
          <div className="leading-[18px]">Hotel Check-In:</div>
          <Input className="w-[170px] h-[21px] mt-[1px] !pt-[2px]">3:00 PM</Input>
          <div className="leading-[18px]">Hotel Check-Out:</div>
          <Input className="w-[170px] h-[21px] mt-[1px] !pt-[2px]">10:00 AM</Input>
        </div>
        <div className="flex-1 self-end h-[33px] border border-[#ababab] mb-[5px] pl-[20px] pt-[4px]">
          <div className="w-[162px] h-[24px] border border-[#ababab] text-right pr-[3px] leading-[24px] text-[#3c4a55]">17</div>
        </div>
      </div>
    </div>
    <div className="h-[23px] shrink-0 bg-[#0070c5] flex justify-end">
      <div className="w-[5px] h-[19px] bg-white" />
    </div>
  </div>
);

const Window1 = () => (
  <div className="absolute left-[7px] top-[7px] w-[1353px] h-[643px] border border-[#5c5c5c] bg-white flex flex-col">
    <div className="h-[32px] shrink-0 flex items-center relative">
      <Qat items={[<Logo w={17} h={14} />, <Mail s={16} />, <Refresh s={16} />, <RedBox s={14} />]} />
      <div className="absolute inset-x-0 text-center text-[#555]">EventPro Setup - EventPro</div>
      <div className="ml-auto pr-[5px]"><WinCtl pin /></div>
    </div>
    <div className="h-[48px] shrink-0 border-b-2 border-[#a6a6a6] flex justify-between">
      <div className="w-[68px] h-[22px] bg-[#0070c5]" />
      <div className="pt-[30px] pr-[6px]">
        <div className="w-0 h-0 border-x-[4px] border-x-transparent border-t-[5px] border-t-[#666]" />
      </div>
    </div>
    <div className="flex-1 min-h-0 flex flex-col items-end pr-[5px]">
      <div className="mt-[31px] w-[400px] flex-1 border-x border-t border-[#b0b0b0] pr-[2px] mb-[8px] flex flex-col items-end">
        <div className="mt-[29px] w-[380px] flex-1 border-x border-t border-[#b0b0b0] overflow-hidden">
          <div className="mt-[47px]">
            {["#eeeeee", "#e2eef8", "#eeeeee", "#f9f9f9", "#eeeeee", "#f9f9f9", "#eeeeee", "#f9f9f9"].map((c, i) => (
              <div key={i} className="h-[21px] border-t border-[#d4d4d4]" style={{ background: c }} />
            ))}
          </div>
        </div>
      </div>
    </div>
    <div className="h-[23px] shrink-0 bg-[#0070c5] flex justify-end items-end pr-px pb-px"><Grip /></div>
  </div>
);

const Arrow = () => (
  <svg width="1368" height="658" className="absolute left-0 top-0 pointer-events-none">
    <polygon points="140,435 169,448 162,453 270,551 264,555 156,458 155,462" fill="#ff0000" />
  </svg>
);

export default function App() {
  return (
    <div className="relative w-[1368px] h-[658px] bg-black overflow-hidden font-['Roboto',sans-serif] text-[11px]">
      <Defs />
      <Window1 />
      <Window2 />
      <Window3 />
      <Dialog />
      <Arrow />
    </div>
  );
}
